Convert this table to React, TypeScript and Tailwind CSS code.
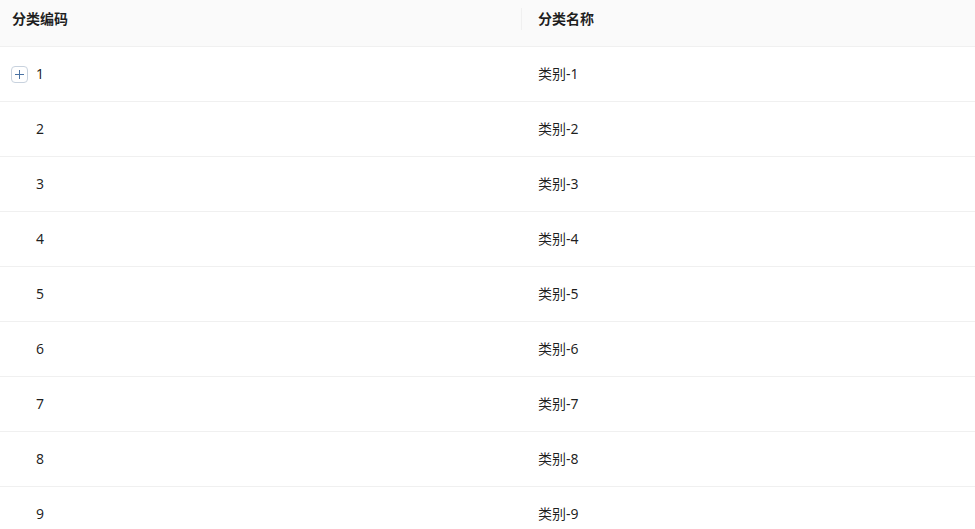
import React from 'react';

const rows = Array.from({ length: 9 }, (_, i) => ({
  code: String(i + 1),
  name: `类别-${i + 1}`,
  hasChildren: i === 0,
}));

const ExpandIcon = () => (
  <span className="relative inline-flex w-[17px] h-[17px] shrink-0 rounded-[4px] border border-[#c8d2de] bg-white">
    <span className="absolute left-[3px] right-[3px] top-[7px] h-px bg-[#4a72a3]" />
    <span className="absolute top-[3px] bottom-[3px] left-[7px] w-px bg-[#4a72a3]" />
  </span>
);

export default function App() {
  return (
    <div
      className="w-[975px] h-[529px] overflow-hidden bg-white text-[14px] text-[rgba(0,0,0,0.88)]"
      style={{ fontFamily: '"Noto Sans", "Noto Sans CJK SC", sans-serif' }}
    >
      <div className="flex h-[47px] bg-[#fafafa] border-b border-[#f0f0f0] font-semibold">
        <div className="w-[521px] pl-3 pt-2 leading-[22px]">分类编码</div>
        <div className="w-px h-[22px] mt-2 bg-[#f0f0f0]" />
        <div className="flex-1 pl-4 pt-2 leading-[22px]">分类名称</div>
      </div>
      {rows.map((row) => (
        <div key={row.code} className="flex items-center h-[55px] border-b border-[#f0f0f0]">
          <div className="w-[522px] pl-[11px] flex items-center gap-[8px] leading-[22px]">
            {row.hasChildren ? <ExpandIcon /> : <span className="w-[17px] shrink-0" />}
            <span>{row.code}</span>
          </div>
          <div className="flex-1 pl-4 leading-[22px]">{row.name}</div>
        </div>
      ))}
    </div>
  );
}
